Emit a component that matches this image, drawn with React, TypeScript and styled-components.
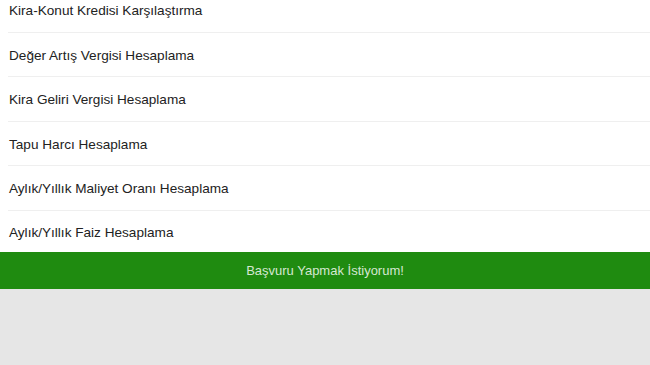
import styled, { createGlobalStyle } from 'styled-components'

const items = [
  'Kira-Konut Kredisi Karşılaştırma',
  'Değer Artış Vergisi Hesaplama',
  'Kira Geliri Vergisi Hesaplama',
  'Tapu Harcı Hesaplama',
  'Aylık/Yıllık Maliyet Oranı Hesaplama',
  'Aylık/Yıllık Faiz Hesaplama',
]

const GlobalStyle = createGlobalStyle`
  html, body {
    margin: 0;
    padding: 0;
    height: 100%;
    overflow: hidden;
    background: #e6e6e6;
    font-family: 'Liberation Sans', Arial, sans-serif;
  }
  #root {
    height: 100%;
  }
`

export default function App() {
  return (
    <Page>
      <GlobalStyle />
      <List>
        {items.map((label, i) => (
          <Row key={label} $last={i === items.length - 1}>
            <Label>{label}</Label>
          </Row>
        ))}
      </List>
      <ApplyButton>Başvuru Yapmak İstiyorum!</ApplyButton>
    </Page>
  )
}

const Page = styled.div`
  display: flex;
  flex-direction: column;
  height: 100%;
  background: #e6e6e6;
`
const List = styled.ul`
  list-style: none;
  margin: -12px 0 0;
  padding: 0 0 0 8px;
  background: #ffffff;
`
const Row = styled.li<{ $last?: boolean }>`
  height: ${(p) => (p.$last ? '41px' : '44.5px')};
  box-sizing: border-box;
  display: flex;
  align-items: center;
  padding-left: 1px;
  border-bottom: ${(p) => (p.$last ? 'none' : '1px solid #efefef')};
`
const Label = styled.span`
  font-size: 13.6px;
  color: #222222;
  padding-top: 2px;
`
const ApplyButton = styled.button`
  height: 37px;
  width: 100%;
  border: none;
  margin: 0;
  background: #1f8b10;
  color: rgba(255, 255, 255, 0.82);
  font-family: 'Liberation Sans', Arial, sans-serif;
  font-size: 13px;
  cursor: pointer;
`
